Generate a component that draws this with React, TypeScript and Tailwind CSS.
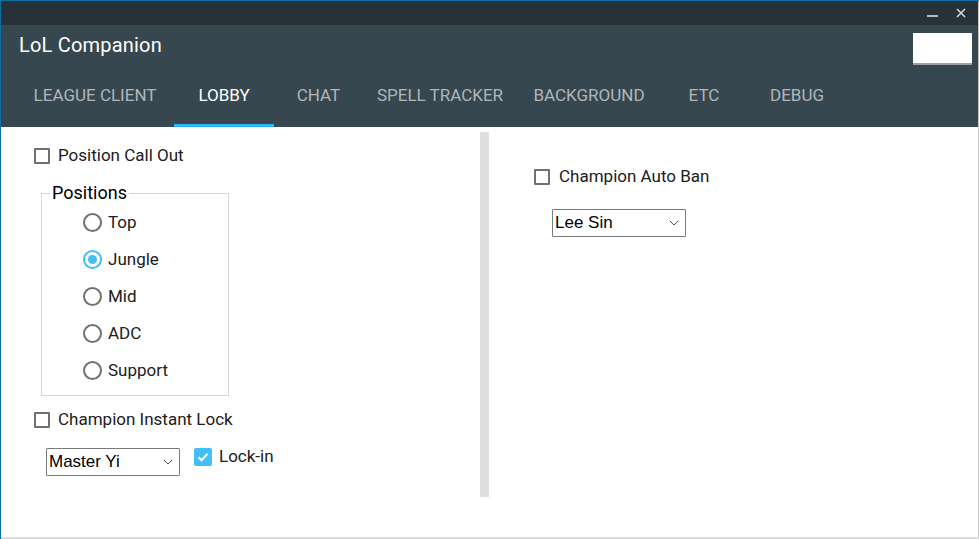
import React from "react";

const Check = ({ checked }: { checked?: boolean }) =>
  checked ? (
    <div className="w-[18px] h-[18px] rounded-[2px] bg-[#40c0f5] flex items-center justify-center">
      <svg width="14" height="14" viewBox="0 0 14 14">
        <path d="M2.5 7.2 L5.6 10.2 L11.5 3.8" fill="none" stroke="white" strokeWidth="2" />
      </svg>
    </div>
  ) : (
    <div className="w-[16px] h-[16px] border-2 border-[#707070] rounded-[1px] bg-white" />
  );

const Radio = ({ checked }: { checked?: boolean }) => (
  <div
    className={
      "w-[19px] h-[19px] rounded-full border-2 flex items-center justify-center " +
      (checked ? "border-[#40c0f5]" : "border-[#707070]")
    }
  >
    {checked && <div className="w-[9px] h-[9px] rounded-full bg-[#40c0f5]" />}
  </div>
);

const Select = ({ value }: { value: string }) => (
  <div className="w-[134px] h-[28px] border border-[#7a7a7a] rounded-[1px] bg-white flex items-center justify-between pl-[2px] pr-[6px]">
    <span className="text-[17px] text-black" style={{ fontFamily: "'Liberation Sans', Arial, sans-serif" }}>
      {value}
    </span>
    <svg width="10" height="6" viewBox="0 0 10 6">
      <path d="M1 1 L5 5 L9 1" fill="none" stroke="#555" strokeWidth="1" />
    </svg>
  </div>
);

const tabs = [
  { t: "LEAGUE CLIENT", w: 158 },
  { t: "LOBBY", w: 100, active: true },
  { t: "CHAT", w: 89 },
  { t: "SPELL TRACKER", w: 154 },
  { t: "BACKGROUND", w: 144 },
  { t: "ETC", w: 86 },
  { t: "DEBUG", w: 100 },
];

export default function App() {
  return (
    <div
      className="w-[979px] h-[539px] bg-[#0e6fa8] flex flex-col pt-[1px] pl-[1px] overflow-hidden"
      style={{ fontFamily: "Roboto, 'Noto Sans', sans-serif" }}
    >
      <div className="flex-1 flex flex-col bg-white border-r border-r-[#c8c8c8] border-b-2 border-b-[#dcdcdc]">
        {/* title bar */}
        <div className="h-[24px] bg-[#263238] flex items-center justify-end pr-[12px] gap-[18px]">
          <div className="w-[11px] h-[2px] bg-[#b0bec5] mt-[6px]" />
          <svg width="10" height="10" viewBox="0 0 10 10">
            <path d="M1 1 L9 9 M9 1 L1 9" stroke="#cfd8dc" strokeWidth="1.6" />
          </svg>
        </div>
        {/* header */}
        <div className="h-[102px] bg-[#37474f] flex flex-col">
          <div className="h-[40px] flex items-start justify-between">
            <div className="text-[20px] text-white pl-[18px] pt-[5px] tracking-[0.2px]">LoL Companion</div>
            <div className="w-[59px] h-[32px] bg-white border-b-2 border-b-[#9e9e9e] mt-[8px] mr-[6px]" />
          </div>
          <div className="flex-1 flex pl-[15px]">
            {tabs.map((tab) => (
              <div
                key={tab.t}
                className={
                  "h-full flex items-center justify-center pb-[1px] text-[17px] " +
                  (tab.active ? "text-white border-b-[3px] border-b-[#29b6f6] pt-[3px]" : "text-[#b0b6ba]")
                }
                style={{ width: tab.w }}
              >
                {tab.t}
              </div>
            ))}
          </div>
        </div>
        {/* content */}
        <div className="flex-1 flex text-[17px] text-[#202020]">
          <div className="w-[479px] pl-[33px] pt-[20px]">
            <div className="flex items-center gap-[8px] h-[18px]">
              <Check />
              <span>Position Call Out</span>
            </div>
            <div className="relative ml-[7px] mt-[28px] w-[188px] h-[203px] border border-[#d5d5d5]">
              <div className="absolute left-[8px] top-[-12px] bg-white px-[2px] text-[18px] text-black leading-[22px]">
                Positions
              </div>
              <div className="flex flex-col pl-[41px] pt-[19px] gap-[18px]">
                {["Top", "Jungle", "Mid", "ADC", "Support"].map((p) => (
                  <div key={p} className="flex items-center gap-[6px] h-[19px]">
                    <Radio checked={p === "Jungle"} />
                    <span>{p}</span>
                  </div>
                ))}
              </div>
            </div>
            <div className="flex items-center gap-[8px] h-[18px] mt-[15px]">
              <Check />
              <span>Champion Instant Lock</span>
            </div>
            <div className="flex items-start ml-[12px] mt-[19px] gap-[14px]">
              <Select value="Master Yi" />
              <div className="flex items-center gap-[7px] h-[18px]">
                <Check checked />
                <span className="text-[17px]">Lock-in</span>
              </div>
            </div>
          </div>
          <div className="w-[9px] bg-[#dfdfdf] mt-[5px] mb-[40px]" />
          <div className="flex-1 pl-[45px] pt-[41px]">
            <div className="flex items-center gap-[9px] h-[18px]">
              <Check />
              <span>Champion Auto Ban</span>
            </div>
            <div className="ml-[18px] mt-[23px]">
              <Select value="Lee Sin" />
            </div>
          </div>
        </div>
      </div>
    </div>
  );
}
